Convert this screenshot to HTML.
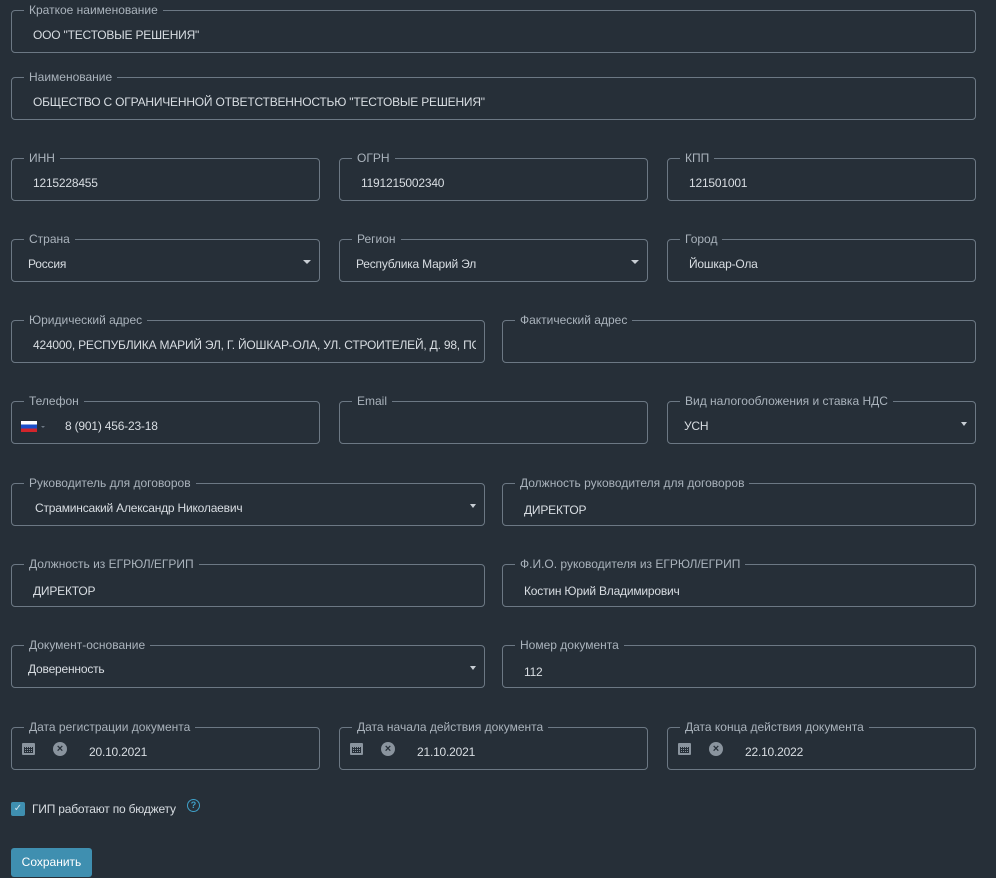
<!DOCTYPE html>
<html><head><meta charset="utf-8"><style>
body{margin:0;width:996px;height:878px;background:#262f38;font-family:"Liberation Sans",sans-serif;overflow:hidden;position:relative}
.f{position:absolute;border:1px solid #6c7884;border-radius:4px;box-sizing:border-box;height:43px}
.f .l{position:absolute;top:-8px;left:12px;padding:0 5px;background:#262f38;color:#aab3bc;font-size:12px;line-height:14px}
.f .v{position:absolute;top:17px;left:21px;color:#d8dde2;font-size:12px;letter-spacing:-0.2px;white-space:nowrap;overflow:hidden;right:8px}
.f .a{position:absolute;right:8px;top:20px;width:0;height:0;border-left:4px solid transparent;border-right:4px solid transparent;border-top:4px solid #c8ced4}
.cal{position:absolute;left:10px;top:15px;width:13px;height:12px;background:#8a949e;border-radius:1px}
.cal:after{content:"";position:absolute;left:2px;top:4px;width:9px;height:6px;background:repeating-linear-gradient(90deg,#262f38 0 1px,transparent 1px 2px),repeating-linear-gradient(0deg,#262f38 0 1px,transparent 1px 2px)}
.x{position:absolute;left:41px;top:14px;width:14px;height:14px;border-radius:50%;background:#8a949e;color:#262f38;font-size:11px;line-height:14px;text-align:center;font-weight:bold}
</style></head><body>
<div class="f" style="left:11px;top:10px;width:965px"><span class="l">Краткое наименование</span><span class="v">ООО "ТЕСТОВЫЕ РЕШЕНИЯ"</span></div>
<div class="f" style="left:11px;top:77px;width:965px"><span class="l">Наименование</span><span class="v">ОБЩЕСТВО С ОГРАНИЧЕННОЙ ОТВЕТСТВЕННОСТЬЮ "ТЕСТОВЫЕ РЕШЕНИЯ"</span></div>

<div class="f" style="left:11px;top:158px;width:309px"><span class="l">ИНН</span><span class="v">1215228455</span></div>
<div class="f" style="left:339px;top:158px;width:309px"><span class="l">ОГРН</span><span class="v">1191215002340</span></div>
<div class="f" style="left:667px;top:158px;width:309px"><span class="l">КПП</span><span class="v">121501001</span></div>

<div class="f" style="left:11px;top:239px;width:309px"><span class="l">Страна</span><span class="v" style="left:16px">Россия</span><span class="a"></span></div>
<div class="f" style="left:339px;top:239px;width:309px"><span class="l">Регион</span><span class="v" style="left:16px">Республика Марий Эл</span><span class="a"></span></div>
<div class="f" style="left:667px;top:239px;width:309px"><span class="l">Город</span><span class="v">Йошкар-Ола</span></div>

<div class="f" style="left:11px;top:320px;width:474px"><span class="l">Юридический адрес</span><span class="v">424000, РЕСПУБЛИКА МАРИЙ ЭЛ, Г. ЙОШКАР-ОЛА, УЛ. СТРОИТЕЛЕЙ, Д. 98, ПОМ</span></div>
<div class="f" style="left:502px;top:320px;width:474px"><span class="l">Фактический адрес</span></div>

<div class="f" style="left:11px;top:401px;width:309px"><span class="l">Телефон</span>
<span style="position:absolute;left:9px;top:19px;width:16px;height:11px;background:linear-gradient(#fff 0 33%,#1c4fc9 33% 66%,#d3252b 66%)"></span>
<span style="position:absolute;left:29px;top:24px;border-left:2px solid transparent;border-right:2px solid transparent;border-top:2px solid #6c7884"></span>
<span class="v" style="left:53px">8 (901) 456-23-18</span></div>
<div class="f" style="left:339px;top:401px;width:309px"><span class="l">Email</span></div>
<div class="f" style="left:667px;top:401px;width:309px"><span class="l">Вид налогообложения и ставка НДС</span><span class="v" style="left:16px">УСН</span><span class="a" style="border-width:3px;border-top-width:4px"></span></div>

<div class="f" style="left:11px;top:483px;width:474px"><span class="l">Руководитель для договоров</span><span class="v" style="left:23px">Страминсакий Александр Николаевич</span><span class="a" style="border-width:3px;border-top-width:4px"></span></div>
<div class="f" style="left:502px;top:483px;width:474px"><span class="l">Должность руководителя для договоров</span><span class="v" style="top:19px">ДИРЕКТОР</span></div>

<div class="f" style="left:11px;top:564px;width:474px"><span class="l">Должность из ЕГРЮЛ/ЕГРИП</span><span class="v" style="top:19px">ДИРЕКТОР</span></div>
<div class="f" style="left:502px;top:564px;width:474px"><span class="l">Ф.И.О. руководителя из ЕГРЮЛ/ЕГРИП</span><span class="v" style="top:19px">Костин Юрий Владимирович</span></div>

<div class="f" style="left:11px;top:645px;width:474px"><span class="l">Документ-основание</span><span class="v" style="left:16px;top:16px">Доверенность</span><span class="a" style="border-width:3px;border-top-width:4px"></span></div>
<div class="f" style="left:502px;top:645px;width:474px"><span class="l">Номер документа</span><span class="v" style="top:19px">112</span></div>

<div class="f" style="left:11px;top:727px;width:309px"><span class="l">Дата регистрации документа</span><span class="cal"></span><span class="x">×</span><span class="v" style="left:77px">20.10.2021</span></div>
<div class="f" style="left:339px;top:727px;width:309px"><span class="l">Дата начала действия документа</span><span class="cal"></span><span class="x">×</span><span class="v" style="left:77px">21.10.2021</span></div>
<div class="f" style="left:667px;top:727px;width:309px"><span class="l">Дата конца действия документа</span><span class="cal"></span><span class="x">×</span><span class="v" style="left:77px">22.10.2022</span></div>

<div style="position:absolute;left:11px;top:802px;width:14px;height:14px;background:#3f8fb0;border-radius:2px;color:#cfe3ec;font-size:10px;line-height:14px;text-align:center">✓</div>
<div style="position:absolute;left:32px;top:802px;color:#d8dde2;font-size:12px;letter-spacing:-0.2px">ГИП работают по бюджету</div>
<div style="position:absolute;left:187px;top:799px;width:11px;height:11px;border:1px solid #3fa0c8;border-radius:50%;color:#3fa0c8;font-size:9px;line-height:11px;text-align:center;font-weight:bold">?</div>

<div style="position:absolute;left:11px;top:848px;width:81px;height:29px;background:#3f8fb0;border-radius:3px;color:#fff;font-size:12px;line-height:29px;text-align:center">Сохранить</div>
</body></html>
